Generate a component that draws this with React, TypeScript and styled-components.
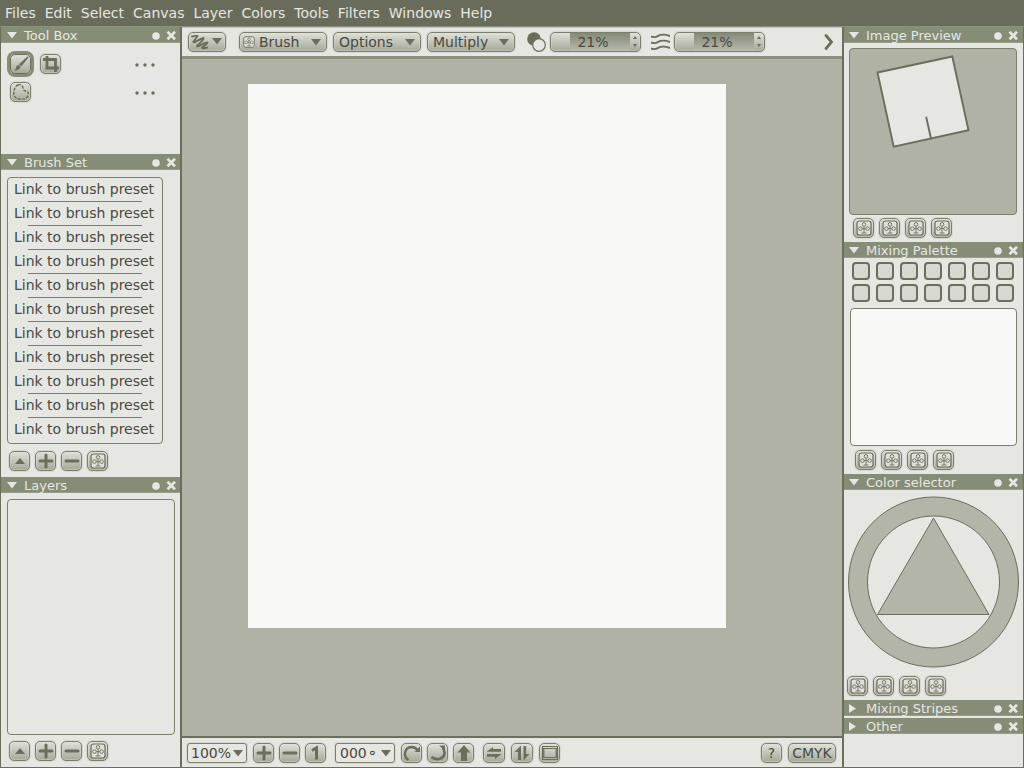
import React from "react";
import styled, { createGlobalStyle, css } from "styled-components";

const ink = "#6b6e5b";
const line = "#7b7f6b";
const paper = "#e6e6e2";
const green = "#868d77";
const stone = "#b0b2a5";
const sheet = "#f8f8f6";
const text = "#484a3e";
const face = "linear-gradient(#dfe0da, #a5a898)";

const Global = createGlobalStyle`
  * { box-sizing: border-box; }
  body {
    margin: 0;
    background: ${paper};
    color: ${text};
    font: 14px/20px "DejaVu Sans", sans-serif;
  }
  button, input, select { font: inherit; color: inherit; margin: 0; }
  svg { display: block; flex: none; }
`;

const Page = styled.div`
  display: flex;
  flex-direction: column;
  min-height: 100vh;
`;

const MenuBar = styled.nav`
  display: flex;
  gap: 9px;
  height: 27px;
  padding: 3px 5px;
  background: #696c5b;
  border-bottom: 1px solid #8c907e;
`;

const MenuItem = styled.button`
  padding: 0;
  border: 0;
  background: none;
  line-height: 20px;
  && { color: ${paper}; }
`;

const Columns = styled.div`
  flex: 1;
  display: grid;
  grid-template-columns: 182px minmax(0, 1fr) 182px;
`;

const Dock = styled.aside<{ $side: "left" | "right" }>`
  display: flex;
  flex-direction: column;
  border: solid ${ink};
  border-width: ${(p) => (p.$side === "left" ? "0 2px 1px 1px" : "0 1px 1px 2px")};
`;

const PanelHead = styled.header<{ $inset: number }>`
  flex: none;
  display: flex;
  align-items: center;
  gap: 6px;
  height: 16px;
  padding: 1px ${(p) => 10 - p.$inset}px 0 ${(p) => p.$inset}px;
  background: ${green};
  color: ${paper};
  box-shadow: inset 0 -1px #979d88;
`;

const PanelTitle = styled.h2`
  flex: 1;
  margin: 0 0 0 1px;
  font-size: 13px;
  font-weight: normal;
  line-height: 15px;
`;

const HeadButton = styled.button`
  display: flex;
  padding: 0;
  border: 0;
  background: none;
  && { color: ${paper}; }
`;

const PanelBody = styled.div<{ $min?: number; $grow?: boolean; $pad?: string }>`
  display: flex;
  flex-direction: column;
  min-height: ${(p) => p.$min ?? 0}px;
  padding: ${(p) => p.$pad ?? "6px"};
  ${(p) => p.$grow && css`flex: 1;`}
`;

const raised = css`
  border: 1px solid ${line};
  border-radius: 5px;
  background: ${face};
  box-shadow: inset 0 0 0 1px rgba(230, 230, 226, 0.35), 0 0 0 1px rgba(107, 110, 91, 0.12);
`;

const IconButton = styled.button<{ $active?: boolean; $w?: number }>`
  ${raised}
  flex: none;
  display: flex;
  align-items: center;
  justify-content: center;
  width: ${(p) => p.$w ?? 21}px;
  height: 20px;
  padding: 0;
  && { color: ${ink}; }
  ${(p) => p.$active && css`
    border-color: ${ink};
    box-shadow: 0 0 0 3px ${green};
  `}
`;

const TextButton = styled(IconButton)`
  && { color: ${text}; }
`;

const ButtonRow = styled.div<{ $pad: string }>`
  display: flex;
  gap: 5px;
  padding: ${(p) => p.$pad};
`;

const ToolGrid = styled.div`
  display: grid;
  grid-template-columns: 21px 21px 1fr;
  gap: 8px 9px;
`;

const MoreButton = styled.button`
  grid-column: 3;
  justify-self: end;
  display: flex;
  align-items: center;
  padding: 2px 0 0;
  border: 0;
  background: none;
  && { color: ${ink}; }
`;

const frame = css`
  border: 1px solid ${line};
  border-radius: 4px;
`;

const PresetList = styled.ul`
  ${frame}
  list-style: none;
  margin: 0 11px 0 0;
  padding: 0 0 1px;
`;

const Preset = styled.li`
  height: 24px;
  line-height: 22px;
  padding-left: 6px;
  &:not(:last-child)::after {
    content: "";
    display: block;
    height: 1px;
    margin: 1px 20px 0 14px;
    background: ${line};
  }
`;

const PresetLink = styled.a`
  display: block;
  color: inherit;
  text-decoration: none;
  white-space: nowrap;
`;

const LayerList = styled.div`
  ${frame}
  flex: 1;
`;

const Centre = styled.main`
  display: flex;
  flex-direction: column;
`;

const ToolBar = styled.div`
  display: flex;
  align-items: center;
  gap: 6px;
  height: 32px;
  padding: 0 8px 1px 6px;
  border-top: 1px solid #c3c5ba;
  border-bottom: 3px solid #8c907e;
`;

const Spring = styled.div`
  flex: 1;
`;

const Space = styled.div<{ $w: number }>`
  flex: none;
  width: ${(p) => p.$w}px;
`;

const Combo = styled.div<{ $w: number; $flat?: boolean }>`
  ${raised}
  position: relative;
  flex: none;
  display: flex;
  align-items: center;
  width: ${(p) => p.$w}px;
  height: 20px;
  color: ${ink};
  ${(p) => p.$flat && css`
    background: ${paper};
    border-radius: 3px;
  `}
`;

const ComboSelect = styled.select<{ $pad: number }>`
  appearance: none;
  width: 100%;
  height: 18px;
  padding: 0 0 0 ${(p) => p.$pad}px;
  border: 0;
  background: none;
  line-height: 18px;
  && { color: ${text}; }
`;

const ComboArrow = styled.span<{ $right: number }>`
  position: absolute;
  right: ${(p) => p.$right}px;
  top: 6px;
  pointer-events: none;
`;

const ComboIcon = styled.span`
  position: absolute;
  left: 3px;
  top: 3px;
  pointer-events: none;
`;

const PenButton = styled(IconButton)`
  justify-content: space-between;
  padding: 0 3px 0 2px;
`;

const Meter = styled.label`
  display: flex;
  align-items: center;
  gap: 4px;
  margin-left: 6px;
  color: ${ink};
  & + & { margin-left: 4px; }
`;

const MeterBox = styled.span`
  ${raised}
  display: grid;
  grid-template-columns: 19px 60px 10px;
  width: 91px;
  height: 20px;
`;

const MeterInput = styled.input`
  grid-column: 2;
  width: 60px;
  height: 17px;
  padding: 2px 14px 0 0;
  border: 0;
  background: linear-gradient(#85897a, #b3b6a8);
  text-align: center;
  && { color: ${text}; }
`;

const Steps = styled.span`
  display: flex;
  flex-direction: column;
  justify-content: center;
  align-items: center;
  gap: 5px;
  height: 18px;
`;

const Step = styled.button`
  display: flex;
  padding: 0;
  border: 0;
  background: none;
  && { color: ${ink}; }
`;

const Desk = styled.div`
  flex: 1;
  display: flex;
  padding: 25px 116px 108px 66px;
  background: ${stone};
`;

const Sheet = styled.div`
  flex: 1;
  background: ${sheet};
`;

const StatusBar = styled.div`
  display: flex;
  align-items: center;
  gap: 6px;
  height: 32px;
  padding: 0 6px 0 5px;
  border-top: 2px solid ${ink};
  border-bottom: 1px solid ${ink};
`;

const StatusGroup = styled.div<{ $gap: number }>`
  display: flex;
  gap: ${(p) => p.$gap}px;
  margin-right: 3px;
`;

const Preview = styled.div`
  ${frame}
  height: 167px;
  background: ${stone};
`;

const Swatches = styled.div`
  display: grid;
  grid-template-columns: repeat(7, 18px);
  justify-content: space-between;
  row-gap: 4px;
  padding: 0 3px 0 2px;
`;

const Swatch = styled.button`
  height: 18px;
  padding: 0;
  border: 2px solid ${ink};
  border-radius: 4px;
  background: #d7d8d1;
`;

const MixArea = styled.div`
  ${frame}
  height: 138px;
  margin-top: 6px;
  background: ${sheet};
`;

const Gap = styled.div`
  height: 2px;
  flex: none;
`;

const Down = () => (
  <svg width="10" height="7" viewBox="0 0 10 7"><path d="M0 0h10L5 6.500z" fill="currentColor" /></svg>
);
const Right = () => (
  <svg width="10" height="9" viewBox="0 0 10 9"><path d="M0 0v9L7 4.5z" fill="currentColor" /></svg>
);

const Stroke = ({ d, w = 2, size = 18 }: { d: string; w?: number; size?: number }) => (
  <svg width={size} height={size} viewBox={`0 0 ${size} ${size}`} fill="none" stroke="currentColor" strokeWidth={w} strokeLinecap="round" strokeLinejoin="round">
    <path d={d} />
  </svg>
);
const Solid = ({ d }: { d: string }) => (
  <svg width="18" height="18" viewBox="0 0 18 18" fill="currentColor"><path d={d} /></svg>
);

const Flower = ({ size = 16 }: { size?: number }) => (
  <svg width={size} height={size} viewBox="0 0 16 16" fill="none" stroke={ink}>
    <rect x="1" y="1" width="14" height="14" rx="2.5" fill="#dfe0da" strokeWidth="1.2" />
    <g strokeWidth=".9">
      <circle cx="8" cy="4.4" r="1.8" />
      <circle cx="4.4" cy="8.6" r="1.8" />
      <circle cx="11.6" cy="8.6" r="1.8" />
      <path d="M8 6.3V13M6.2 8.6h3.6M5.6 13h4.8" />
    </g>
  </svg>
);

const FlowerButtons = ({ pad }: { pad: string }) => (
  <ButtonRow $pad={pad}>
    {[1, 2, 3, 4].map((n) => (
      <IconButton key={n} aria-label={`Action ${n}`}><Flower /></IconButton>
    ))}
  </ButtonRow>
);

const plus = "M9 3v12M3 9h12";
const minus = "M3 9h12";

const ListButtons = ({ pad }: { pad: string }) => (
  <ButtonRow $pad={pad}>
    <IconButton aria-label="Move up"><Solid d="M9 6l5 6H4z" /></IconButton>
    <IconButton aria-label="Add"><Stroke d={plus} w={3} /></IconButton>
    <IconButton aria-label="Remove"><Stroke d={minus} w={3} /></IconButton>
    <IconButton aria-label="Configure"><Flower /></IconButton>
  </ButtonRow>
);

const Head = ({ title, inset = 6, closed }: { title: string; inset?: number; closed?: boolean }) => (
  <PanelHead $inset={inset}>
    <HeadButton aria-label={`Toggle ${title}`} aria-expanded={!closed}>{closed ? <Right /> : <Down />}</HeadButton>
    <PanelTitle>{title}</PanelTitle>
    <HeadButton aria-label={`Float ${title}`}>
      <svg width="8" height="8" viewBox="0 0 8 8"><circle cx="4" cy="4" r="3.8" fill="currentColor" /></svg>
    </HeadButton>
    <HeadButton aria-label={`Close ${title}`}>
      <svg width="10" height="9" viewBox="0 0 10 9"><path d="M1.5 .8l7.500 7.500M9 .8L1.500 8.300" stroke="currentColor" strokeWidth="2.700" /></svg>
    </HeadButton>
  </PanelHead>
);

const Dots = () => (
  <svg width="20" height="4" viewBox="0 0 20 4" fill="currentColor">
    <circle cx="2" cy="2" r="1.7" /><circle cx="10" cy="2" r="1.7" /><circle cx="18" cy="2" r="1.7" />
  </svg>
);

const Picker = ({ label, value, w, pad = 5, right = 6, flat, icon }: {
  label: string; value: string; w: number; pad?: number; right?: number; flat?: boolean; icon?: React.ReactNode;
}) => (
  <Combo $w={w} $flat={flat}>
    {icon && <ComboIcon>{icon}</ComboIcon>}
    <ComboSelect $pad={pad} aria-label={label}><option>{value}</option></ComboSelect>
    <ComboArrow $right={right}><Down /></ComboArrow>
  </Combo>
);

const Percent = ({ label, icon }: { label: string; icon: React.ReactNode }) => (
  <Meter>
    {icon}
    <MeterBox>
      <MeterInput aria-label={label} defaultValue="21%" />
      <Steps>
        <Step aria-label={`Increase ${label}`}><svg width="4" height="3" viewBox="0 0 4 3"><path d="M2 0l2 3H0z" fill="currentColor" /></svg></Step>
        <Step aria-label={`Decrease ${label}`}><svg width="4" height="3" viewBox="0 0 4 3"><path d="M0 0h4L2 3z" fill="currentColor" /></svg></Step>
      </Steps>
    </MeterBox>
  </Meter>
);

const menus = ["Files", "Edit", "Select", "Canvas", "Layer", "Colors", "Tools", "Filters", "Windows", "Help"];

export default function App() {
  return (
    <Page>
      <Global />
      <MenuBar>{menus.map((m) => <MenuItem key={m}>{m}</MenuItem>)}</MenuBar>
      <Columns>
        <Dock $side="left">
          <Head title="Tool Box" />
          <PanelBody $min={111} $pad="11px 25px 0 9px">
            <ToolGrid>
              <IconButton $active aria-label="Paint">
                <svg width="18" height="18" viewBox="0 0 18 18" fill="currentColor">
                  <path d="M16.200 1.600c.5.4.3.9 0 1.300L9.300 11.300 7 9.200 15 1.900c.4-.4.8-.6 1.200-.3zM6.500 9.800l2.200 2c-.5 1.500-1.700 2.600-3.300 3.200-1 .4-2.200.6-3.400.5 1.300-.7 1.600-1.500 2-2.800.4-1.300 1.200-2.600 2.500-2.900z" />
                </svg>
              </IconButton>
              <IconButton aria-label="Crop">
                <svg width="18" height="18" viewBox="0 0 18 18" fill="none" stroke="currentColor" strokeWidth="2.800"><path d="M5 1v12h12M1 4.500h12.500V17" /></svg>
              </IconButton>
              <MoreButton aria-label="More paint tools"><Dots /></MoreButton>
              <IconButton aria-label="Lasso">
                <svg width="18" height="18" viewBox="0 0 18 18" fill="none" stroke="currentColor" strokeWidth="1.4" strokeDasharray="3 1.300">
                  <path d="M6 2C9 .8 10.500 2.500 11 5c.3 2 1 2.600 2.800 3S17 9.500 16.300 12c-.8 3-4 4.500-7.800 4.200C4.500 16 1.800 14 1.800 10.500 1.800 7 3 3.200 6 2z" />
                </svg>
              </IconButton>
              <MoreButton aria-label="More selection tools"><Dots /></MoreButton>
            </ToolGrid>
          </PanelBody>
          <Head title="Brush Set" />
          <PanelBody $min={307} $pad="7px 6px 0">
            <PresetList>
              {Array.from({ length: 11 }, (_, i) => (
                <Preset key={i}><PresetLink href="#preset">Link to brush preset</PresetLink></Preset>
              ))}
            </PresetList>
            <ListButtons pad="7px 0 0 2px" />
          </PanelBody>
          <Head title="Layers" />
          <PanelBody $grow $pad="6px 5px 6px 6px">
            <LayerList />
            <ListButtons pad="6px 0 0 2px" />
          </PanelBody>
        </Dock>

        <Centre>
          <ToolBar>
            <PenButton $w={38} aria-label="Brush stroke">
              <svg width="19" height="16" viewBox="0 0 19 16" fill="none" stroke="currentColor" strokeWidth="1.900" strokeLinecap="round" strokeLinejoin="round">
                <path d="M1 2.500Q3.500 1.500 6.500 2Q5.500 3.500 2.500 7.500Q2 9 4.500 7.800Q9 5 12.500 4Q13.500 5 6 12Q6 13 9 11.500Q13 9 16.500 8.500Q16 10 11 13.500Q11 15 16 13.500" />
              </svg>
              <Down />
            </PenButton>
            <Space $w={1} />
            <Picker label="Brush" value="Brush" w={88} pad={19} right={5} icon={<Flower size={12} />} />
            <Picker label="Options" value="Options" w={88} right={5} />
            <Picker label="Blend mode" value="Multiply" w={88} right={5} />
            <Percent
              label="Opacity"
              icon={
                <svg width="19" height="20" viewBox="0 0 19 20">
                  <circle cx="7" cy="7" r="6.800" fill={ink} />
                  <circle cx="12" cy="13" r="6.300" fill={paper} stroke={ink} strokeWidth="1.200" />
                </svg>
              }
            />
            <Percent
              label="Flow"
              icon={
                <svg width="19" height="18" viewBox="0 0 19 18" fill="none" stroke="currentColor" strokeWidth="1.900">
                  <path d="M0 3.500c4 1.500 5 .5 7.500-.8S13.500 1 19 3M0 9.500c4 1.500 5 .5 7.500-.8S13.500 7 19 9M0 15.500c4 1.500 5 .5 7.500-.8S13.500 13 19 15" />
                </svg>
              }
            />
            <Spring />
            <Step aria-label="More options">
              <svg width="10" height="18" viewBox="0 0 10 18" fill="none" stroke="currentColor" strokeWidth="2.800" strokeLinecap="round"><path d="M2 2.500L7.500 9 2 15.500" /></svg>
            </Step>
          </ToolBar>
          <Desk><Sheet /></Desk>
          <StatusBar>
            <Picker flat label="Zoom" value="100%" w={60} pad={3} right={3} />
            <StatusGroup $gap={5}>
              <IconButton aria-label="Zoom in"><Stroke d={plus} w={3} /></IconButton>
              <IconButton aria-label="Zoom out"><Stroke d={minus} w={3} /></IconButton>
              <IconButton aria-label="Actual size">
                <svg width="18" height="18" viewBox="0 0 18 18" fill="none" stroke="currentColor" strokeWidth="3"><path d="M5 6.500L9.500 3.800V15.500" /></svg>
              </IconButton>
            </StatusGroup>
            <Picker flat label="Rotation" value="000⚬" w={60} pad={4} right={3} />
            <StatusGroup $gap={5}>
              <IconButton aria-label="Rotate right">
                <svg width="18" height="18" viewBox="0 0 18 18" fill="none" stroke="currentColor" strokeWidth="2.400">
                  <path d="M5.500 16C0 13 1 3.500 8.500 3c3 0 4.500 1 6 3" /><path d="M17 2.500V8h-5.500z" fill="currentColor" stroke="none" />
                </svg>
              </IconButton>
              <IconButton aria-label="Rotate left">
                <svg width="18" height="18" viewBox="0 0 18 18" fill="none" stroke="currentColor" strokeWidth="2.600">
                  <path d="M2.500 13c4.500 4 13.500 2 13-4.500 0-2-.8-3.500-2-4.500" /><path d="M10 1.500h6v5z" fill="currentColor" stroke="none" />
                </svg>
              </IconButton>
              <IconButton aria-label="Reset rotation"><Solid d="M9 1l6.500 7.500H12V17H6V8.500H2.500z" /></IconButton>
            </StatusGroup>
            <StatusGroup $gap={6}>
              <IconButton $w={22} aria-label="Mirror horizontally"><Solid d="M1.500 7.700L8 3v2h8v2.700zM16.500 10L10 15v-2.300H2V10z" /></IconButton>
              <IconButton $w={22} aria-label="Mirror vertically"><Solid d="M8 1.500V16H5V8H1.500zM10.500 16.500V2h2.700v8h3.300z" /></IconButton>
              <IconButton aria-label="Full screen">
                <svg width="18" height="16" viewBox="0 0 18 16" fill="none" stroke="currentColor" strokeWidth="1.200">
                  <path d="M1.500 1.500h15v13h-15zM1.500 3.500h15M1.500 12.500h15M2.800 4v8M15.200 4v8" />
                </svg>
              </IconButton>
            </StatusGroup>
            <Spring />
            <TextButton>?</TextButton>
            <TextButton $w={48}>CMYK</TextButton>
          </StatusBar>
        </Centre>

        <Dock $side="right">
          <Head title="Image Preview" inset={5} />
          <PanelBody $min={199} $pad="5px 6px 0 5px">
            <Preview>
              <svg width="166" height="165" viewBox="850 49 166 165" fill={paper} stroke={ink} strokeWidth="1.900">
                <path d="M877.500 72.500L952.300 56.500L968.500 130.300L893.700 146.700Z" />
                <path d="M926.300 117.500L931 138.500" strokeLinecap="round" />
              </svg>
            </Preview>
            <FlowerButtons pad="3px 0 0 4px" />
          </PanelBody>
          <Head title="Mixing Palette" inset={5} />
          <PanelBody $min={216} $pad="4px 6px 0">
            <Swatches>
              {Array.from({ length: 14 }, (_, i) => <Swatch key={i} aria-label={`Colour ${i + 1}`} />)}
            </Swatches>
            <MixArea />
            <FlowerButtons pad="4px 0 0 5px" />
          </PanelBody>
          <Head title="Color selector" inset={5} />
          <PanelBody $min={210} $pad="6px 4px 0 3px">
            <svg width="172" height="172" viewBox="-1 0 172 172" fill="#b2b5a8" stroke={ink}>
              <circle cx="85.500" cy="86" r="85" />
              <circle cx="85.500" cy="86" r="66" fill={paper} />
              <path d="M85.500 22L141 118.500H29.500Z" />
            </svg>
            <FlowerButtons pad="8px 0 0" />
          </PanelBody>
          <Head title="Mixing Stripes" inset={5} closed />
          <Gap />
          <Head title="Other" inset={5} closed />
        </Dock>
      </Columns>
    </Page>
  );
}
